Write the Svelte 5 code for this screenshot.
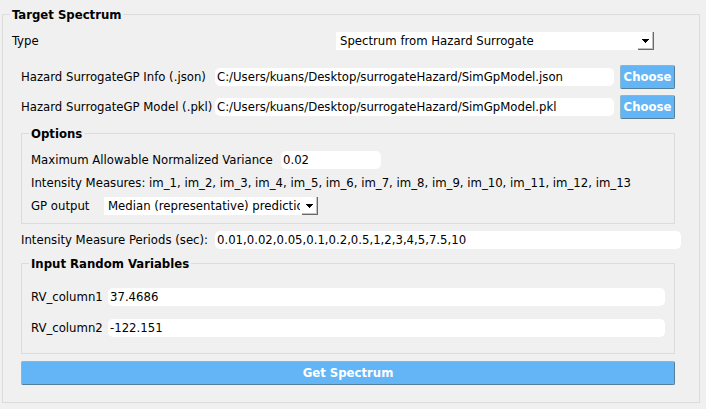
<script>
  let spectrumType = $state('Spectrum from Hazard Surrogate');
  let files = $state([
    { id: 'gp-info', label: 'Hazard SurrogateGP Info (.json)', path: 'C:/Users/kuans/Desktop/surrogateHazard/SimGpModel.json' },
    { id: 'gp-model', label: 'Hazard SurrogateGP Model (.pkl)', path: 'C:/Users/kuans/Desktop/surrogateHazard/SimGpModel.pkl' }
  ]);
  let variance = $state('0.02');
  const measures = Array.from({ length: 13 }, (_, i) => `im_${i + 1}`).join(', ');
  let output = $state('Median (representative) prediction');
  let periods = $state('0.01,0.02,0.05,0.1,0.2,0.5,1,2,3,4,5,7.5,10');
  let variables = $state([
    { name: 'RV_column1', value: '37.4686' },
    { name: 'RV_column2', value: '-122.151' }
  ]);
</script>

{#snippet arrow()}
  <span class="arrow" aria-hidden="true">
    <svg width="7" height="4" viewBox="0 0 7 4" shape-rendering="crispEdges"><path d="M0 0h7v1h-1v1h-1v1h-1v1h-1v-1h-1v-1h-1v-1h-1z" /></svg>
  </span>
{/snippet}

<fieldset class="target">
  <legend>Target Spectrum</legend>

  <div class="type">
    <label for="type">Type</label>
    <div class="combo">
      <select id="type" bind:value={spectrumType}>
        <option>Spectrum from Hazard Surrogate</option>
      </select>
      {@render arrow()}
    </div>
  </div>

  <form class="body" onsubmit={(e) => e.preventDefault()}>
    <div class="files">
      {#each files as file (file.id)}
        <div class="row">
          <label for={file.id}>{file.label}</label>
          <input id={file.id} type="text" bind:value={file.path} />
          <button type="button">Choose</button>
        </div>
      {/each}
    </div>

    <fieldset class="options">
      <legend>Options</legend>
      <div class="line">
        <label class="wide" for="variance">Maximum Allowable Normalized Variance</label>
        <input id="variance" class="short" type="text" bind:value={variance} />
      </div>
      <div class="line">Intensity Measures: {measures}</div>
      <div class="line">
        <label class="narrow" for="output">GP output</label>
        <div class="combo small">
          <select id="output" bind:value={output}>
            <option>Median (representative) prediction</option>
          </select>
          {@render arrow()}
        </div>
      </div>
    </fieldset>

    <div class="row periods">
      <label for="periods">Intensity Measure Periods (sec):</label>
      <input id="periods" type="text" bind:value={periods} />
    </div>

    <fieldset class="variables">
      <legend>Input Random Variables</legend>
      {#each variables as v (v.name)}
        <div class="line">
          <label class="name" for={v.name}>{v.name}</label>
          <input id={v.name} type="text" bind:value={v.value} />
        </div>
      {/each}
    </fieldset>

    <button type="submit">Get Spectrum</button>
  </form>
</fieldset>

<style>
  :global(body) {
    background: #f0f0f0;
  }

  fieldset,
  input,
  select,
  button {
    font: 13px/18px "DejaVu Sans Condensed", Tahoma, "DejaVu Sans", sans-serif;
    color: #000;
    box-sizing: border-box;
    min-width: 0;
    margin: 0;
  }

  fieldset {
    border: 1px solid #dcdcdc;
    padding: 0;
  }

  legend {
    padding: 0 2px;
    font-weight: bold;
    line-height: 15px;
  }

  label {
    white-space: nowrap;
  }

  .target {
    margin: 7px 6px 6px 2px;
    padding: 10px 0 17px 7px;
  }

  .type {
    display: grid;
    grid-template-columns: 1fr 1fr;
    gap: 6px;
    padding: 0 45px 0 2px;
  }

  .body {
    display: flex;
    flex-direction: column;
    gap: 7px;
    padding: 15px 24px 0 11px;
  }

  .files {
    display: flex;
    flex-direction: column;
    gap: 6px;
  }

  .row {
    display: grid;
    grid-template-columns: 188px 1fr 55px;
    align-items: center;
    gap: 6px;
  }

  .periods {
    grid-template-columns: 188px 1fr;
    margin-right: -6px;
  }

  .options,
  .variables {
    display: flex;
    flex-direction: column;
    padding: 10px 9px 8px 7px;
    gap: 5px;
  }

  .variables {
    padding: 17px 9px 16px 7px;
    gap: 13px;
  }

  .line {
    display: flex;
    align-items: center;
    padding-left: 2px;
    white-space: nowrap;
  }

  .wide {
    width: 250px;
  }

  .narrow {
    width: 73px;
  }

  .name {
    width: 77px;
  }

  input {
    flex: 1;
    height: 18px;
    padding: 0 2px;
    border: 0;
    border-radius: 5px;
    background: #fff;
  }

  .short {
    flex: 0 0 100px;
  }

  .combo {
    position: relative;
    display: flex;
  }

  .small {
    width: 214px;
  }

  select {
    appearance: none;
    width: 100%;
    height: 18px;
    padding: 0 18px 0 4px;
    border: 0;
    border-radius: 0;
    background: #fff;
  }

  .arrow {
    position: absolute;
    top: 0;
    right: 0;
    display: flex;
    align-items: center;
    justify-content: center;
    box-sizing: border-box;
    width: 16px;
    height: 18px;
    border: solid #696969;
    border-width: 0 1px 1px 0;
    box-shadow: inset -1px -1px #c0c0c0;
    pointer-events: none;
  }

  button {
    height: 24px;
    padding: 0;
    border: 1px solid;
    border-color: #8bb8c8 #557f98 #557f98 #8bb8c8;
    border-radius: 2px;
    background: #64b5f6;
    color: #fff;
    font-weight: bold;
  }
</style>
